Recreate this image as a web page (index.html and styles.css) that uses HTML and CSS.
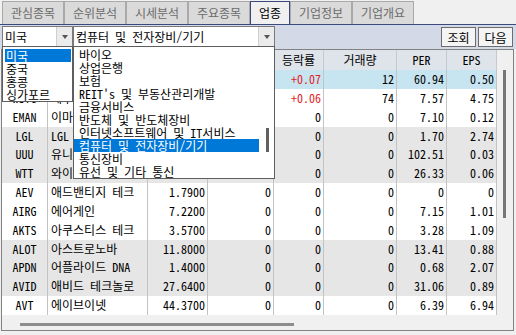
FILE: index.html
```html
<!DOCTYPE html>
<html lang="ko">
<head>
    <meta charset="UTF-8">
    <title>업종</title>
    <link rel="stylesheet" href="styles.css">
</head>
<body>
    <div class="tabs">
        <div class="tab">관심종목</div>
        <div class="tab">순위분석</div>
        <div class="tab">시세분석</div>
        <div class="tab">주요종목</div>
        <div class="tab active">업종</div>
        <div class="tab">기업정보</div>
        <div class="tab">기업개요</div>
    </div>

    <div class="toolbar">
        <div class="combo market">
            <span class="combo-text">미국</span>
            <span class="combo-btn"></span>
            <ul class="droplist market-list">
                <li class="sel">미국</li>
                <li>중국</li>
                <li>홍콩</li>
                <li>싱가포르</li>
            </ul>
        </div>
        <div class="combo sector">
            <span class="combo-text">컴퓨터 및 전자장비/기기</span>
            <span class="combo-btn"></span>
            <div class="droplist sector-list">
                <ul class="items">
                    <li>바이오</li>
                    <li>상업은행</li>
                    <li>보험</li>
                    <li>REIT's 및 부동산관리개발</li>
                    <li>금융서비스</li>
                    <li>반도체 및 반도체장비</li>
                    <li>인터넷소프트웨어 및 IT서비스</li>
                    <li class="sel">컴퓨터 및 전자장비/기기</li>
                    <li>통신장비</li>
                    <li>유선 및 기타 통신</li>
                </ul>
                <div class="list-scroll"><span class="list-thumb"></span></div>
            </div>
        </div>
        <div class="buttons">
            <button class="btn">조회</button>
            <button class="btn">다음</button>
        </div>
    </div>

    <div class="grid">
        <div class="grid-body">
            <div class="table">
                <div class="row head">
                    <div>종목</div><div>종목명</div><div>현재가</div><div>전일대비</div>
                    <div>등락률</div><div>거래량</div><div>PER</div><div>EPS</div>
                </div>
                <div class="row hl">
                    <div class="sym">CAMP</div><div class="name">칼앰프</div><div class="num">2.4100</div><div class="num up">0</div>
                    <div class="num up">+0.07</div><div class="num">12</div><div class="num">60.94</div><div class="num">0.50</div>
                </div>
                <div class="row">
                    <div class="sym">WSTG</div><div class="name">제우스</div><div class="num">9.8200</div><div class="num up">0</div>
                    <div class="num up">+0.06</div><div class="num">74</div><div class="num">7.57</div><div class="num">4.75</div>
                </div>
                <div class="row">
                    <div class="sym">EMAN</div><div class="name">이마진</div><div class="num">0.8500</div><div class="num">0</div>
                    <div class="num">0</div><div class="num">0</div><div class="num">7.10</div><div class="num">0.12</div>
                </div>
                <div class="row gray">
                    <div class="sym">LGL</div><div class="name">LGL 그룹</div><div class="num">4.6600</div><div class="num">0</div>
                    <div class="num">0</div><div class="num">0</div><div class="num">1.70</div><div class="num">2.74</div>
                </div>
                <div class="row gray">
                    <div class="sym">UUU</div><div class="name">유니버설</div><div class="num">2.8700</div><div class="num">0</div>
                    <div class="num">0</div><div class="num">0</div><div class="num">102.51</div><div class="num">0.03</div>
                </div>
                <div class="row gray">
                    <div class="sym">WTT</div><div class="name">와이어리스</div><div class="num">1.5100</div><div class="num">0</div>
                    <div class="num">0</div><div class="num">0</div><div class="num">26.33</div><div class="num">0.06</div>
                </div>
                <div class="row">
                    <div class="sym">AEV</div><div class="name">애드밴티지 테크</div><div class="num">1.7900</div><div class="num">0</div>
                    <div class="num">0</div><div class="num">0</div><div class="num">0</div><div class="num">0</div>
                </div>
                <div class="row">
                    <div class="sym">AIRG</div><div class="name">에어게인</div><div class="num">7.2200</div><div class="num">0</div>
                    <div class="num">0</div><div class="num">0</div><div class="num">7.15</div><div class="num">1.01</div>
                </div>
                <div class="row">
                    <div class="sym">AKTS</div><div class="name">아쿠스티스 테크</div><div class="num">3.5700</div><div class="num">0</div>
                    <div class="num">0</div><div class="num">0</div><div class="num">3.28</div><div class="num">1.09</div>
                </div>
                <div class="row gray">
                    <div class="sym">ALOT</div><div class="name">아스트로노바</div><div class="num">11.8000</div><div class="num">0</div>
                    <div class="num">0</div><div class="num">0</div><div class="num">13.41</div><div class="num">0.88</div>
                </div>
                <div class="row gray">
                    <div class="sym">APDN</div><div class="name">어플라이드 DNA</div><div class="num">1.4000</div><div class="num">0</div>
                    <div class="num">0</div><div class="num">0</div><div class="num">0.68</div><div class="num">2.07</div>
                </div>
                <div class="row gray">
                    <div class="sym">AVID</div><div class="name">애비드 테크놀로</div><div class="num">27.6400</div><div class="num">0</div>
                    <div class="num">0</div><div class="num">0</div><div class="num">31.06</div><div class="num">0.89</div>
                </div>
                <div class="row">
                    <div class="sym">AVT</div><div class="name">에이브이넷</div><div class="num">44.3700</div><div class="num">0</div>
                    <div class="num">0</div><div class="num">0</div><div class="num">6.39</div><div class="num">6.94</div>
                </div>
            </div>
            <div class="vscroll"><span class="vthumb"></span></div>
        </div>
        <div class="hscroll"><span class="hthumb"></span></div>
    </div>
</body>
</html>
```

FILE: styles.css
```css
body {
    margin: 0;
    width: 516px;
    height: 335px;
    overflow: hidden;
    background-color: #f0f0f0;
    font-family: "Noto Sans Mono CJK KR", "Noto Sans CJK KR", monospace;
    font-size: 12px;
    color: #000;
}
ul {
    list-style: none;
    margin: 0;
    padding: 0;
}

/* tabs */
.tabs {
    display: flex;
    height: 24px;
    padding: 1px 0 0 2px;
    box-sizing: border-box;
    position: relative;
    z-index: 2;
}
.tab {
    width: 62px;
    height: 23px;
    line-height: 21px;
    box-sizing: border-box;
    text-align: center;
    border: 1px solid #a9a9a9;
    border-bottom: none;
    background-color: #dadada;
    color: #6b6b6b;
}
.tab.active {
    width: 40px;
    height: 24px;
    border-color: #3a4a7c;
    background-color: #f0f0f0;
    color: #000;
}

/* toolbar */
.toolbar {
    display: flex;
    align-items: flex-start;
    height: 25px;
    box-sizing: border-box;
    border-top: 1px solid #3a4a7c;
    background-color: #d3d9e6;
    padding: 1px 3px 0 2px;
    position: relative;
    z-index: 3;
}
.combo {
    position: relative;
    display: flex;
    height: 21px;
    box-sizing: border-box;
    border: 1px solid #7a7a7a;
    background-color: #fff;
}
.combo.market { width: 71px; }
.combo.sector { width: 202px; }
.combo-text {
    flex: 1;
    padding-left: 2px;
    line-height: 19px;
    white-space: nowrap;
}
.combo-btn {
    width: 15px;
    display: flex;
    align-items: center;
    justify-content: center;
    background-color: #ebebeb;
    border-left: 1px solid #d0d0d0;
}
.combo-btn::after {
    content: "";
    border-left: 3px solid transparent;
    border-right: 3px solid transparent;
    border-top: 4px solid #555;
}
.buttons {
    margin-left: auto;
    margin-top: 1px;
    display: flex;
    gap: 2px;
}
.btn {
    width: 35px;
    height: 20px;
    padding: 0;
    border: 1px solid #6d6d6d;
    background-color: #f4f4f4;
    font-family: inherit;
    font-size: 12px;
    color: #000;
}

/* drop lists */
.droplist {
    position: absolute;
    top: 100%;
    left: -1px;
    box-sizing: border-box;
    border: 1px solid #5e5e5e;
    background-color: #fff;
}
.droplist li {
    height: 13px;
    line-height: 13px;
    white-space: nowrap;
}
.droplist li.sel {
    background-color: #0078d7;
    color: #fff;
}
.market-list {
    width: 71px;
    padding: 2px 1px 0 2px;
    height: 56px;
}
.market-list li { padding-left: 1px; }
.sector-list {
    width: 202px;
    height: 133px;
    padding-top: 1px;
    display: flex;
}
.sector-list .items { width: 185px; }
.sector-list li { padding-left: 5px; }
.list-scroll {
    width: 15px;
}
.list-thumb {
    display: block;
    width: 3px;
    height: 24px;
    margin: 80px 0 0 7px;
    background-color: #606060;
}

/* grid */
.grid {
    margin: 0 2px 0 1px;
    border: 1px solid #828282;
    background-color: #f0f0f0;
}
.grid-body {
    display: flex;
}
.table {
    width: 495px;
}
.row {
    display: grid;
    grid-template-columns: 46px 100px 60px 66px 50px 73px 50px 50px;
    height: 18.85px;
    line-height: 18.85px;
    background-color: #fff;
}
.row > div {
    border-right: 1px solid #c3c3c3;
    padding: 0 2px;
    white-space: nowrap;
    overflow: hidden;
}
.row.head {
    height: 20px;
    line-height: 20px;
    background-color: #dfe3ea;
    text-align: center;
}
.row.head > div { border-right-color: #c4cad3; }
.row.hl { background-color: #c7e4f1; }
.row.gray { background-color: #e6e6e6; }
.sym { text-align: center; }
.name { padding-left: 3px !important; }
.num { text-align: right; }
.up { color: #e3231f; }

.vscroll {
    width: 16px;
}
.vthumb {
    display: block;
    width: 3px;
    height: 148px;
    margin: 20px 0 0 6px;
    background-color: #767676;
}
.hscroll {
    height: 15px;
}
.hthumb {
    display: block;
    width: 274px;
    height: 3px;
    margin: 0 0 0 18px;
    position: relative;
    top: 8px;
    background-color: #8d8d8d;
}
```
